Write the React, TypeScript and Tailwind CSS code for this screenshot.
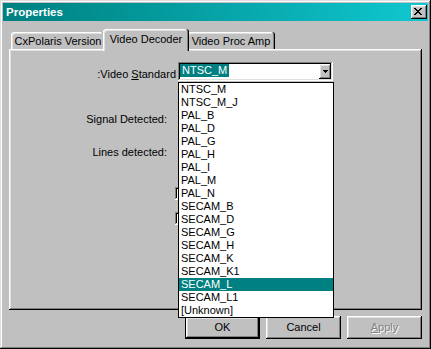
import React from 'react'

const standards = [
  'NTSC_M', 'NTSC_M_J', 'PAL_B', 'PAL_D', 'PAL_G', 'PAL_H', 'PAL_I', 'PAL_M', 'PAL_N',
  'SECAM_B', 'SECAM_D', 'SECAM_G', 'SECAM_H', 'SECAM_K', 'SECAM_K1', 'SECAM_L', 'SECAM_L1', '[Unknown]',
]
const selected = 'SECAM_L'

// win98 bevels
const raised = 'shadow-[inset_-1px_-1px_#000,inset_1px_1px_#fff,inset_-2px_-2px_#808080,inset_2px_2px_#dfdfdf]'
const sunken = 'shadow-[inset_-1px_-1px_#fff,inset_1px_1px_#808080,inset_-2px_-2px_#dfdfdf,inset_2px_2px_#000]'
const tabEdge = 'shadow-[inset_-1px_0_#000,inset_1px_1px_#fff,inset_-2px_0_#808080,inset_2px_2px_#dfdfdf]'

function CloseGlyph() {
  return (
    <svg width="8" height="7" viewBox="0 0 8 7" shapeRendering="crispEdges" fill="#000">
      <path d="M0 0h2v1H0zM6 0h2v1H6zM1 1h2v1H1zM5 1h2v1H5zM2 2h4v1H2zM3 3h2v1H3zM2 4h4v1H2zM1 5h2v1H1zM5 5h2v1H5zM0 6h2v1H0zM6 6h2v1H6z" />
    </svg>
  )
}

function Tab({ label, active, width }: { label: string; active?: boolean; width: string }) {
  if (active) {
    return (
      <div className={`relative z-10 -mx-[2px] -mb-[2px] h-[22px] ${width} rounded-t-[3px] bg-[#c0c0c0] pt-[4px] text-center leading-[13px] ${tabEdge}`}>
        {label}
      </div>
    )
  }
  return (
    <div className={`h-[17px] ${width} rounded-t-[3px] bg-[#c0c0c0] pt-[3px] text-center leading-[13px] ${tabEdge}`}>
      {label}
    </div>
  )
}

function Checkbox() {
  return <div className={`ml-[165px] h-[13px] w-[13px] bg-white ${sunken}`} />
}

function Button({ children, isDefault }: { children: React.ReactNode; isDefault?: boolean }) {
  if (isDefault) {
    return (
      <div className="h-[23px] w-[75px] border border-black">
        <div className={`flex h-full w-full items-center justify-center bg-[#c0c0c0] leading-[13px] ${raised}`}>{children}</div>
      </div>
    )
  }
  return (
    <div className={`flex h-[23px] w-[75px] items-center justify-center bg-[#c0c0c0] leading-[13px] ${raised}`}>{children}</div>
  )
}

export default function App() {
  return (
    <div className="h-[349px] w-[431px] bg-white font-['Liberation_Sans',Arial,sans-serif] text-[11px] text-black">
      <div className="h-full w-full bg-[#c0c0c0] p-[3px] shadow-[inset_-1px_-1px_#000,inset_1px_1px_#dfdfdf,inset_-2px_-2px_#808080,inset_2px_2px_#fff]">
        {/* title bar */}
        <div className="flex h-[18px] items-center justify-between bg-linear-to-r from-[#008080] to-[#10c8d0] pl-[3px] pr-[1px]">
          <span className="pt-[1px] text-[11.5px] font-bold leading-[13px] text-white">Properties</span>
          <div className={`flex h-[14px] w-[16px] items-start bg-[#c0c0c0] pl-[3px] pt-[3px] ${raised}`}>
            <CloseGlyph />
          </div>
        </div>

        <div className="px-[6px] pt-[8px]">
          {/* tabs */}
          <div className="flex h-[20px] items-end pl-[2px]">
            <Tab label="CxPolaris Version" width="w-[94px]" />
            <Tab label="Video Decoder" width="w-[86px]" active />
            <Tab label="Video Proc Amp" width="w-[88px]" />
          </div>

          {/* tab page */}
          <div className={`relative h-[261px] bg-[#c0c0c0] p-[1px] ${raised}`}>
            <div className="pt-[12px]">
              <div className="flex items-start">
                <div className="mt-[6px] w-[166px] text-right leading-[13px]">
                  :Video <span className="underline underline-offset-[1px]">S</span>tandard
                </div>
                <div className="relative ml-[2px] w-[155px]">
                  <div className={`flex h-[19px] items-start bg-white p-[2px] ${sunken}`}>
                    <span className="h-[13px] bg-[#008080] px-[2px] leading-[13px] text-white">NTSC_M</span>
                    <div className="flex-1" />
                    <div className={`flex h-[15px] w-[12px] items-center justify-center bg-[#c0c0c0] ${raised}`}>
                      <svg width="5" height="3" viewBox="0 0 5 3" shapeRendering="crispEdges" fill="#000">
                        <path d="M0 0h5v1H0zM1 1h3v1H1zM2 2h1v1H2z" />
                      </svg>
                    </div>
                  </div>
                  {/* open dropdown list */}
                  <div className="absolute left-0 top-[20px] z-20 w-[156px] border border-black bg-white">
                    {standards.map((s) => (
                      <div
                        key={s}
                        className={`h-[13px] pl-[2px] leading-[13px] ${s === selected ? 'bg-[#008080] text-white' : ''}`}
                      >
                        {s}
                      </div>
                    ))}
                  </div>
                </div>
              </div>

              <div className="mt-[32px] w-[157px] text-right leading-[13px]">Signal Detected:</div>
              <div className="mt-[20px] w-[157px] text-right leading-[13px]">Lines detected:</div>

              <div className="mt-[28px]">
                <Checkbox />
              </div>
              <div className="mt-[12px]">
                <Checkbox />
              </div>
            </div>
          </div>

          {/* dialog buttons */}
          <div className="mt-[6px] flex justify-end gap-[6px]">
            <Button isDefault>OK</Button>
            <Button>Cancel</Button>
            <Button>
              <span className="text-[#808080] [text-shadow:1px_1px_0_#fff]">
                <span className="underline underline-offset-[1px]">A</span>pply
              </span>
            </Button>
          </div>
        </div>
      </div>
    </div>
  )
}
